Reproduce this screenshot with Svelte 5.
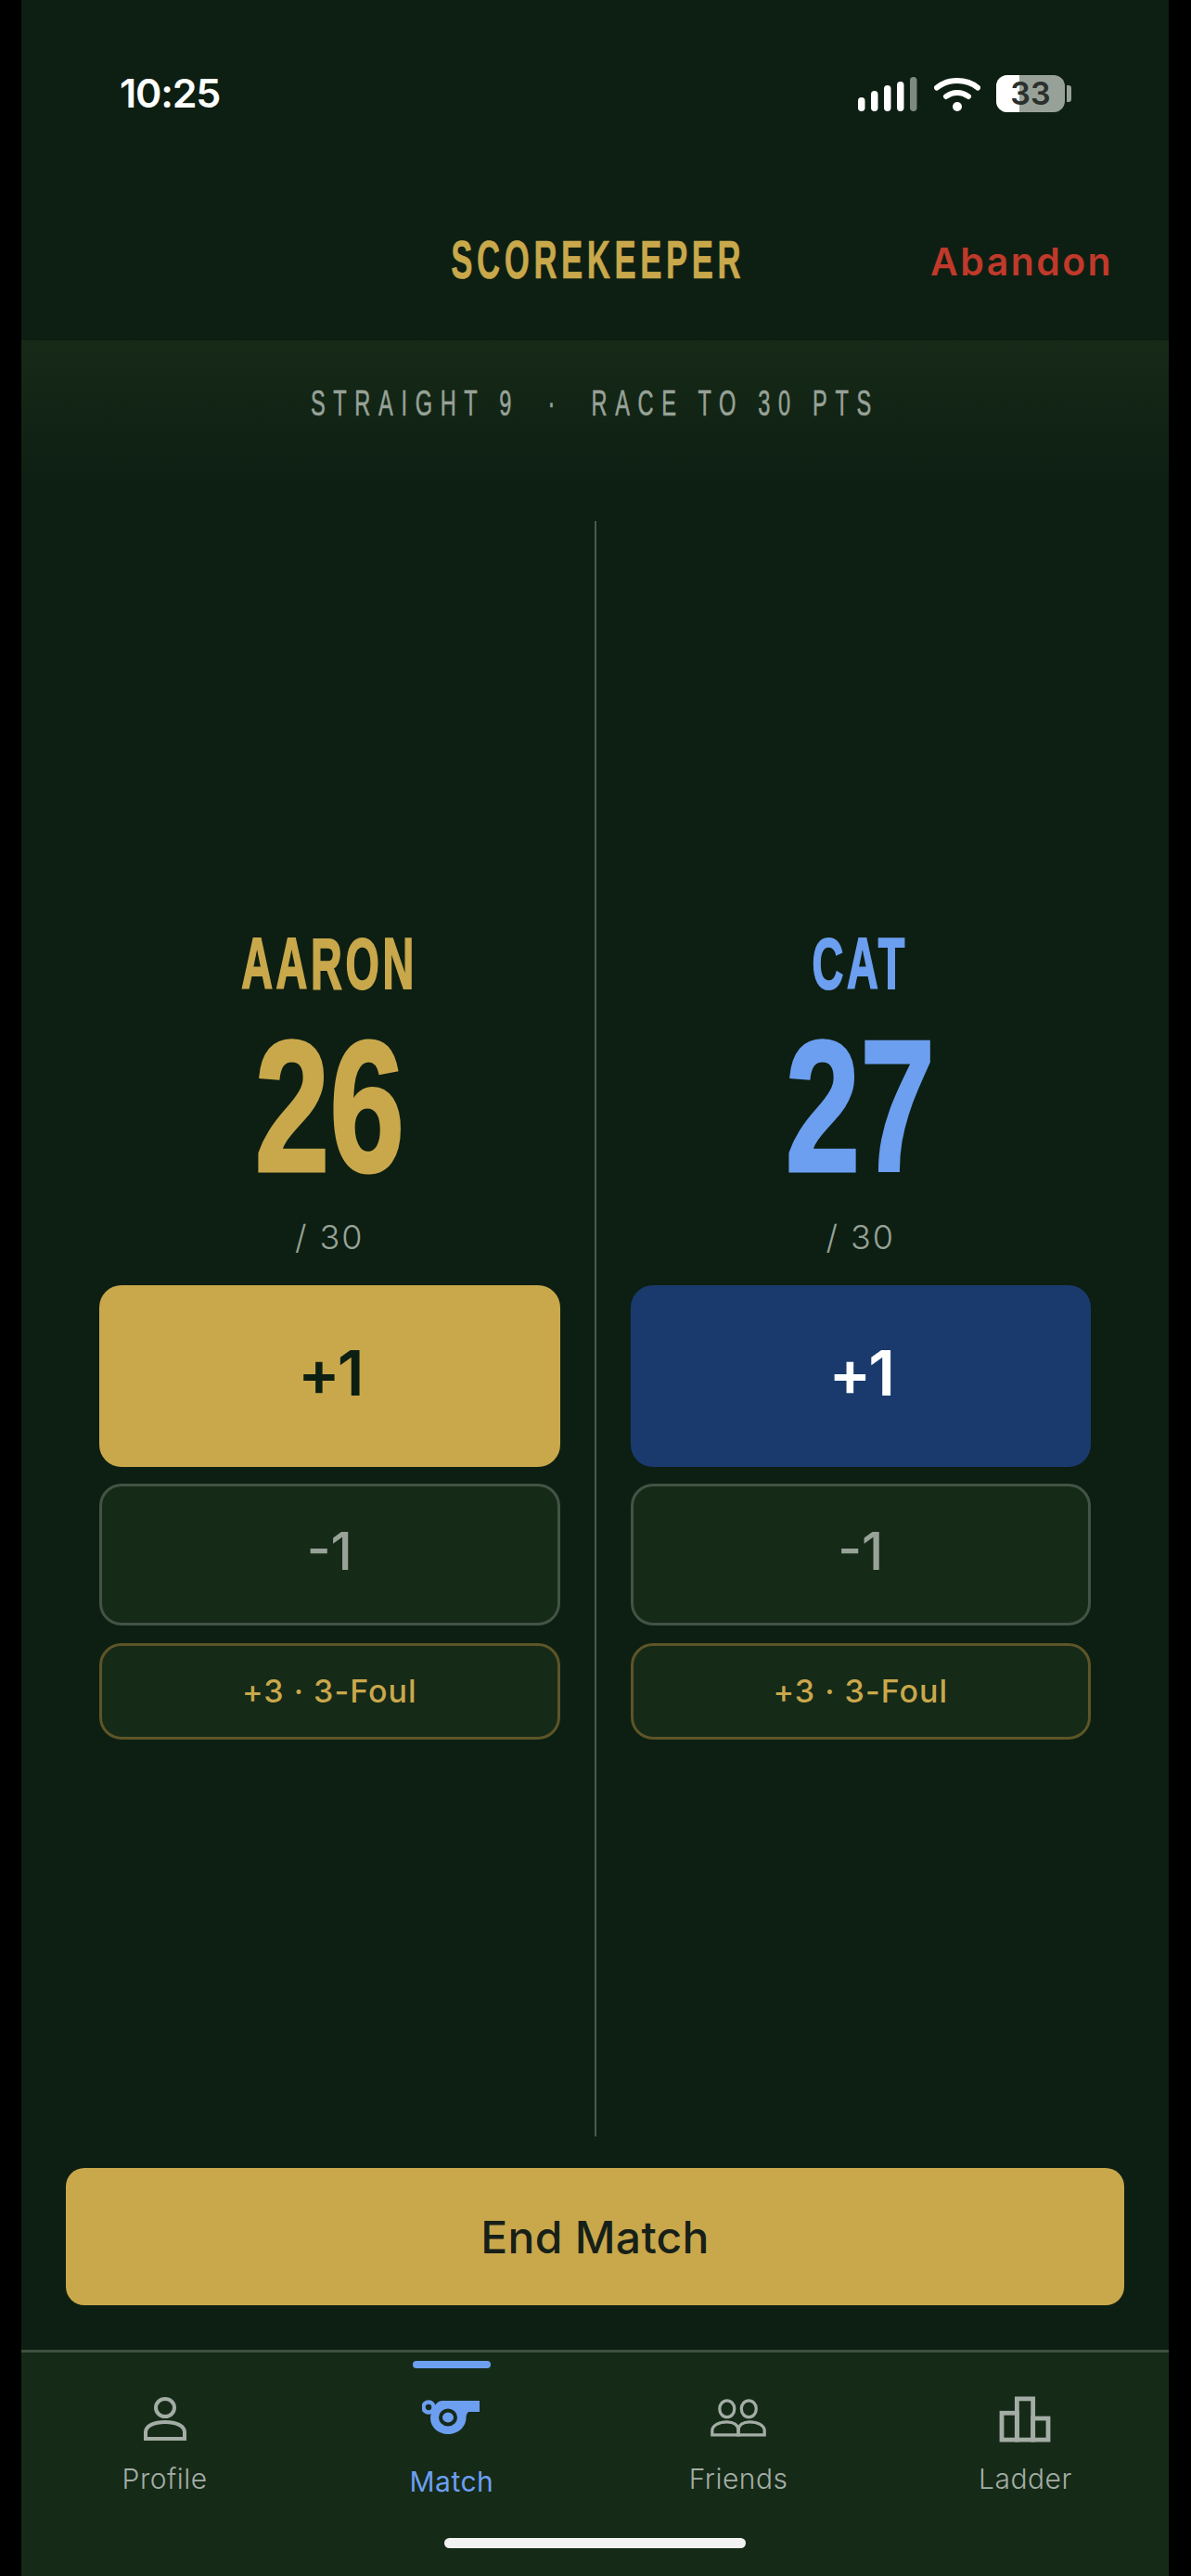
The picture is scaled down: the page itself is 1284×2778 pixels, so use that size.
<script>
  const players = [
    { name: "AARON", score: 26, tone: "gold" },
    { name: "CAT", score: 27, tone: "blue" }
  ];
  const target = 30;
  const signal = [
    { x: 0, h: 15 },
    { x: 14, h: 22 },
    { x: 28, h: 28 },
    { x: 42, h: 32 },
    { x: 56, h: 37 }
  ];
</script>

<div class="screen">
  <div class="status">
    <span class="time">10:25</span>
    <div class="status-icons">
      <svg class="signal" width="64" height="37" viewBox="0 0 64 37">
        {#each signal as bar, i}
          <rect x={bar.x} y={37 - bar.h} width="7.5" height={bar.h} rx="3.7" fill={i === 4 ? "#7d8a80" : "#fff"} />
        {/each}
      </svg>
      <svg class="wifi" width="50" height="37" viewBox="0 0 50 37">
        <path d="M3 11.5C15 1.5 35 1.5 47 11.5" fill="none" stroke="#fff" stroke-width="6" stroke-linecap="round" />
        <path d="M13 21C20 15.5 30 15.5 37 21" fill="none" stroke="#fff" stroke-width="6" stroke-linecap="round" />
        <circle cx="25" cy="32" r="5" fill="#fff" />
      </svg>
      <div class="battery">
        <div class="battery-body"><div class="battery-fill"></div><span>33</span></div>
        <div class="battery-nub"></div>
      </div>
    </div>
  </div>

  <header class="header">
    <span></span>
    <h1>SCOREKEEPER</h1>
    <button class="abandon">Abandon</button>
  </header>

  <div class="subhead"><span>STRAIGHT 9 &nbsp;·&nbsp; RACE TO {target} PTS</span></div>

  <main class="board">
    {#each players as p, i}
      {#if i === 1}<div class="divider"></div>{/if}
      <section class="col {p.tone}">
        <div class="name"><span>{p.name}</span></div>
        <div class="score"><span>{p.score}</span></div>
        <div class="target">/ {target}</div>
        <button class="btn plus">+1</button>
        <button class="btn minus">-1</button>
        <button class="btn foul">+3 · 3-Foul</button>
      </section>
    {/each}
  </main>

  <div class="end-wrap"><button class="end">End Match</button></div>

  <nav class="tabs">
    <div class="tab">
      <svg width="50" height="50" viewBox="0 0 50 50" fill="none" stroke="#a3ada5" stroke-width="4">
        <ellipse cx="25" cy="12.5" rx="10" ry="9.5" />
        <path d="M4 46V39C4 32 13 28 25 28S46 32 46 39V46Z" />
      </svg>
      <span>Profile</span>
    </div>
    <div class="tab active">
      <div class="indicator"></div>
      <svg width="64" height="50" viewBox="0 0 64 50">
        <path fill="#6c9ff0" d="M22 5H62V17H50C48 19 47.500 21 47.500 23C47.500 34 38 41 28 41C17 41 9 33 9 24C9 20 10 17 12 14C14 9 17 5 22 5Z" />
        <circle cx="7" cy="12" r="5.500" fill="#162a18" stroke="#6c9ff0" stroke-width="4.500" />
        <ellipse cx="28" cy="23" rx="8" ry="7.500" fill="#6c9ff0" stroke="#162a18" stroke-width="4" />
      </svg>
      <span>Match</span>
    </div>
    <div class="tab">
      <svg width="62" height="50" viewBox="0 0 66 50" fill="none" stroke="#a3ada5" stroke-width="3.500">
        <ellipse cx="20" cy="13" rx="8.500" ry="9.500" />
        <ellipse cx="45" cy="13" rx="8.500" ry="9.500" />
        <path d="M3 43V38C3 32 11 28 20 28C27 28 33 31 33 38V43Z" />
        <path d="M33 43V38C33 31 39 28 46 28C55 28 63 32 63 38V43Z" />
      </svg>
      <span>Friends</span>
    </div>
    <div class="tab">
      <svg width="58" height="52" viewBox="0 0 58 52" fill="none" stroke="#a3ada5" stroke-width="5">
        <rect x="3" y="19" width="17" height="30" />
        <rect x="20" y="3" width="18" height="46" />
        <rect x="38" y="25" width="17" height="24" />
      </svg>
      <span>Ladder</span>
    </div>
    <div class="home"></div>
  </nav>
</div>

<style>
  :global(body) {
    margin: 0;
    background: #000;
  }

  .screen {
    box-sizing: border-box;
    width: 1237px;
    height: 2778px;
    margin-left: 23px;
    display: flex;
    flex-direction: column;
    background: #0d1f12;
    font-family: "Inter", "Liberation Sans", sans-serif;
    overflow: hidden;
  }

  button {
    font-family: inherit;
    cursor: pointer;
  }

  /* status bar */
  .status {
    height: 200px;
    flex: none;
    display: flex;
    justify-content: space-between;
    align-items: flex-start;
    padding: 0 105px 0 106px;
    box-sizing: border-box;
  }

  .time {
    margin-top: 78px;
    color: #fff;
    font-size: 43px;
    line-height: 44px;
    font-weight: 600;
    letter-spacing: -1.2px;
  }

  .status-icons {
    display: flex;
    align-items: center;
    margin-top: 81px;
    height: 40px;
  }

  .wifi {
    margin-left: 18px;
  }

  .battery {
    display: flex;
    align-items: center;
    margin-left: 17px;
    gap: 2px;
  }

  .battery-body {
    position: relative;
    width: 74px;
    height: 40px;
    border-radius: 12px;
    background: #98a198;
    overflow: hidden;
    display: flex;
    align-items: center;
    justify-content: center;
  }

  .battery-fill {
    position: absolute;
    left: 0;
    top: 0;
    bottom: 0;
    width: 25px;
    background: #fff;
  }

  .battery-body span {
    position: relative;
    color: #2b302d;
    font-size: 34px;
    font-weight: 600;
    line-height: 40px;
  }

  .battery-nub {
    width: 5px;
    height: 18px;
    background: #98a198;
    border-radius: 0 3px 3px 0;
  }

  /* header */
  .header {
    height: 167px;
    flex: none;
    display: grid;
    grid-template-columns: 1fr auto 1fr;
    align-items: center;
    padding: 0 60px 8px 60px;
    box-sizing: border-box;
  }

  h1 {
    margin: 0;
    color: #c9a84c;
    font-family: "Liberation Sans", sans-serif;
    font-weight: 700;
    font-size: 57px;
    line-height: 60px;
    letter-spacing: 7.5px;
    white-space: nowrap;
    -webkit-text-stroke: 0.6px #c9a84c;
    transform: translateX(3px) scaleX(0.61);
  }

  .abandon {
    justify-self: end;
    margin-top: 4px;
    padding: 0;
    background: none;
    border: none;
    color: #c0392b;
    font-size: 41px;
    font-weight: 600;
    letter-spacing: 2.4px;
  }

  .subhead {
    flex: none;
    height: 195px;
    box-sizing: border-box;
    padding-top: 48px;
    text-align: center;
    background: linear-gradient(#172a18, #0d1f12 80%);
    color: #98a298;
    font-family: "Liberation Sans", sans-serif;
    font-size: 38px;
    line-height: 40px;
  }

  .subhead span {
    display: inline-block;
    letter-spacing: 14px;
    white-space: nowrap;
    -webkit-text-stroke: 0.6px #98a298;
    transform: scaleX(0.62);
  }

  /* board */
  .board {
    flex: 1;
    display: flex;
    padding: 0 47px;
    min-height: 0;
  }

  .divider {
    width: 2px;
    flex: none;
    background: #4a5a4c;
  }

  .col {
    flex: 1;
    min-width: 0;
    padding: 8px 37px 0;
    display: flex;
    flex-direction: column;
    justify-content: center;
    align-items: stretch;
    text-align: center;
  }

  .gold {
    --accent: #c9a84c;
    --plus-bg: #c9a84c;
    --plus-fg: #0d1f12;
  }

  .blue {
    --accent: #6c9ff0;
    --plus-bg: #1a3a6e;
    --plus-fg: #fff;
  }

  .name {
    color: var(--accent);
    font-family: "Liberation Sans", sans-serif;
    font-weight: 700;
    font-size: 78px;
    line-height: 80px;
  }

  .name span {
    display: inline-block;
    letter-spacing: 6px;
    -webkit-text-stroke: 2px var(--accent);
    transform: scaleX(0.6);
  }

  .score {
    margin-top: 29px;
    color: var(--accent);
    font-family: "Liberation Sans", sans-serif;
    font-weight: 700;
    font-size: 202px;
    line-height: 170px;
  }

  .score span {
    display: inline-block;
    -webkit-text-stroke: 3px var(--accent);
    transform: scaleX(0.72);
  }

  .target {
    margin-top: 34px;
    color: #98a298;
    font-size: 36px;
    line-height: 44px;
    font-weight: 300;
    letter-spacing: 2px;
  }

  .btn {
    display: block;
    width: 100%;
    box-sizing: border-box;
    border-radius: 24px;
  }

  .plus {
    margin-top: 30px;
    height: 196px;
    padding: 0 0 8px;
    border: none;
    background: var(--plus-bg);
    color: var(--plus-fg);
    font-size: 68px;
    font-weight: 600;
    letter-spacing: -3px;
  }

  .minus {
    margin-top: 18px;
    height: 153px;
    padding: 0 0 6px;
    background: #162a18;
    border: 3px solid #435345;
    color: #98a298;
    font-size: 56px;
    font-weight: 500;
  }

  .foul {
    margin-top: 19px;
    height: 104px;
    background: #162a18;
    border: 3px solid #5d5528;
    color: #c9a84c;
    font-size: 34px;
    font-weight: 500;
    letter-spacing: 1px;
  }

  /* footer */
  .end-wrap {
    flex: none;
    padding: 34px 48px 48px;
  }

  .end {
    display: block;
    width: 100%;
    height: 148px;
    border: none;
    border-radius: 20px;
    background: #c9a84c;
    color: #172018;
    font-size: 48px;
    font-weight: 500;
    letter-spacing: 0.3px;
  }

  .tabs {
    position: relative;
    flex: none;
    height: 244px;
    box-sizing: border-box;
    display: grid;
    grid-template-columns: repeat(4, 1fr);
    align-items: start;
    background: #162a18;
    border-top: 3px solid #3f4f40;
  }

  .tab {
    position: relative;
    height: 140px;
    padding-top: 47px;
    display: flex;
    flex-direction: column;
    align-items: center;
    color: #a3ada5;
    font-size: 30px;
    font-weight: 300;
    line-height: 36px;
    letter-spacing: 0.5px;
  }

  .tab svg {
    display: block;
    height: 50px;
    flex: none;
  }

  .tab span {
    margin-top: 21px;
  }

  .active {
    color: #6c9ff0;
    font-weight: 400;
  }

  .active span {
    margin-top: 24px;
  }

  .indicator {
    position: absolute;
    top: 9px;
    left: 50%;
    width: 84px;
    height: 8px;
    margin-left: -42px;
    border-radius: 4px;
    background: #6c9ff0;
  }

  .home {
    position: absolute;
    left: 456px;
    bottom: 30px;
    width: 325px;
    height: 11px;
    border-radius: 6px;
    background: #f2f2f2;
  }
</style>
